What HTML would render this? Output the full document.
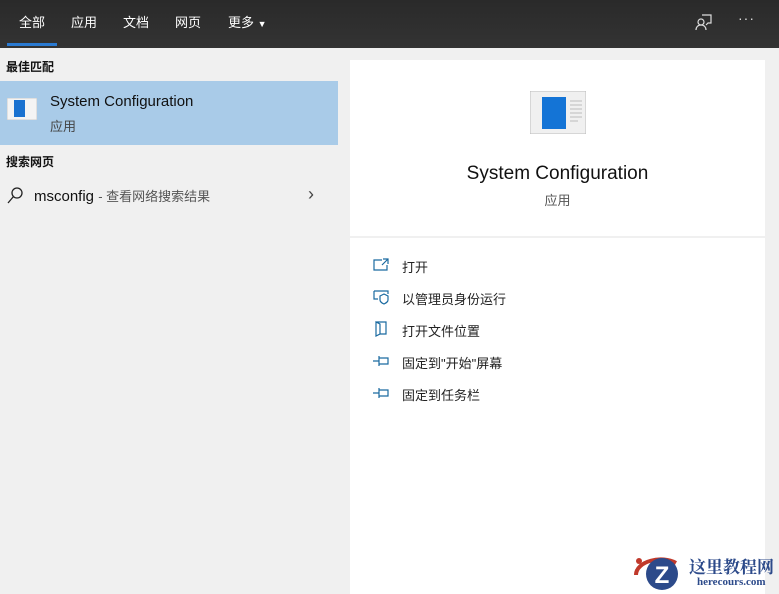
<!DOCTYPE html>
<html><head><meta charset="utf-8"><style>
body{margin:0;width:779px;height:594px;overflow:hidden;background:#f0f0f0;font-family:"Liberation Sans","Noto Sans CJK SC",sans-serif;position:relative}
.top{position:absolute;left:0;top:0;width:779px;height:48px;background:linear-gradient(#2a2a2a,#333)}
.tab{position:absolute;top:12px;color:#fff;font-size:13px}
.ul{position:absolute;left:7px;top:43px;width:50px;height:3px;background:#2a7ad2}
.h{position:absolute;left:6px;font-size:12px;font-weight:bold;color:#111}
.sel{position:absolute;left:0;top:81px;width:338px;height:64px;background:#a9cbe8}
.card{position:absolute;left:350px;top:60px;width:415px;height:534px;background:#fff}
.div{position:absolute;left:350px;top:236px;width:415px;height:2px;background:#f0f0f0}
.act{position:absolute;left:402px;font-size:13px;color:#222}
.ic{position:absolute;left:372px}
</style></head><body>
<div class="top"></div>
<div class="tab" style="left:19px">全部</div>
<div class="tab" style="left:71px">应用</div>
<div class="tab" style="left:123px">文档</div>
<div class="tab" style="left:175px">网页</div>
<div class="tab" style="left:228px">更多 <span style="font-size:9px">▼</span></div>
<div class="ul"></div>
<svg style="position:absolute;left:694px;top:12px" width="20" height="20" viewBox="0 0 20 20" fill="none" stroke="#ddd" stroke-width="1.2"><path d="M8 3h9v8h-3l-2 2"/><circle cx="7" cy="10" r="3"/><path d="M2 18c0-3 2-5 5-5s5 2 5 5"/></svg>
<div style="position:absolute;left:738px;top:10px;color:#ddd;font-size:14px;letter-spacing:1px">···</div>
<div class="h" style="top:58px">最佳匹配</div>
<div class="sel"></div>
<svg style="position:absolute;left:7px;top:98px" width="30" height="22"><rect x="0" y="0" width="30" height="22" fill="#f4f4f4" stroke="#ccc"/><rect x="7" y="2" width="11" height="17" fill="#1a72d0"/></svg>
<div style="position:absolute;left:50px;top:93px;font-size:15px;color:#111">System Configuration</div>
<div style="position:absolute;left:50px;top:116px;font-size:13px;color:#444">应用</div>
<div class="h" style="top:153px">搜索网页</div>
<svg style="position:absolute;left:6px;top:187px" width="18" height="18" fill="none" stroke="#222" stroke-width="1.3"><circle cx="11" cy="6" r="5"/><path d="M7.5 9.5L2 16"/></svg>
<div style="position:absolute;left:34px;top:186px;font-size:15px;color:#111">msconfig <span style="font-size:13px;color:#555">- 查看网络搜索结果</span></div>
<div style="position:absolute;left:308px;top:184px;font-size:18px;color:#444">›</div>
<div class="card"></div>
<svg style="position:absolute;left:530px;top:91px" width="56" height="43"><rect x="0" y="0" width="56" height="43" fill="#f0f0f0" stroke="#bbb"/><rect x="12" y="6" width="24" height="32" fill="#1474d6"/><g stroke="#bbb"><path d="M40 10h12M40 14h12M40 18h12M40 22h12M40 26h12M40 30h8"/></g></svg>
<div style="position:absolute;left:350px;width:415px;text-align:center;top:163px;font-size:19px;color:#111">System Configuration</div>
<div style="position:absolute;left:350px;width:415px;text-align:center;top:190px;font-size:13px;color:#555">应用</div>
<div class="div"></div>
<svg class="ic" style="top:257px" width="18" height="16" fill="none" stroke="#1a6aa0" stroke-width="1.2"><path d="M10 3H2v10h13V8M11 2h5v5M16 2l-6 6"/></svg>
<div class="act" style="top:257px">打开</div>
<svg class="ic" style="top:289px" width="18" height="16" fill="none" stroke="#1a6aa0" stroke-width="1.2"><path d="M2 2h14v3M2 2v8h4"/><path d="M8 7l4-2 4 2v4c0 2-2 3-4 4-2-1-4-2-4-4z"/></svg>
<div class="act" style="top:289px">以管理员身份运行</div>
<svg class="ic" style="top:320px" width="18" height="18" fill="none" stroke="#1a6aa0" stroke-width="1.2"><path d="M4 2h10v12H8M4 2v14l4-2V4z"/></svg>
<div class="act" style="top:321px">打开文件位置</div>
<svg class="ic" style="top:354px" width="18" height="14" fill="none" stroke="#1a6aa0" stroke-width="1.2"><path d="M1 7h6M7 2v10M7 4h9v6H7"/></svg>
<div class="act" style="top:353px">固定到"开始"屏幕</div>
<svg class="ic" style="top:386px" width="18" height="14" fill="none" stroke="#1a6aa0" stroke-width="1.2"><path d="M1 7h6M7 2v10M7 4h9v6H7"/></svg>
<div class="act" style="top:385px">固定到任务栏</div>
<svg style="position:absolute;left:632px;top:553px" width="54" height="40"><path d="M4 22C4 8 30 2 44 10" stroke="#c0392b" stroke-width="4" fill="none"/><circle cx="30" cy="21" r="16" fill="#2c4a8a"/><text x="30" y="30" text-anchor="middle" font-size="24" font-weight="bold" fill="#fff" font-family="Liberation Sans">Z</text><circle cx="7" cy="8" r="3" fill="#c0392b"/></svg>
<div style="position:absolute;left:689px;top:553px;font-family:'Liberation Serif','Noto Serif CJK SC',serif;font-size:17px;font-weight:bold;color:#2c4a8a">这里教程网</div>
<div style="position:absolute;left:697px;top:576px;font-family:'Liberation Serif',serif;font-size:11px;font-weight:bold;color:#2c4a8a">herecours.com</div>
</body></html>
